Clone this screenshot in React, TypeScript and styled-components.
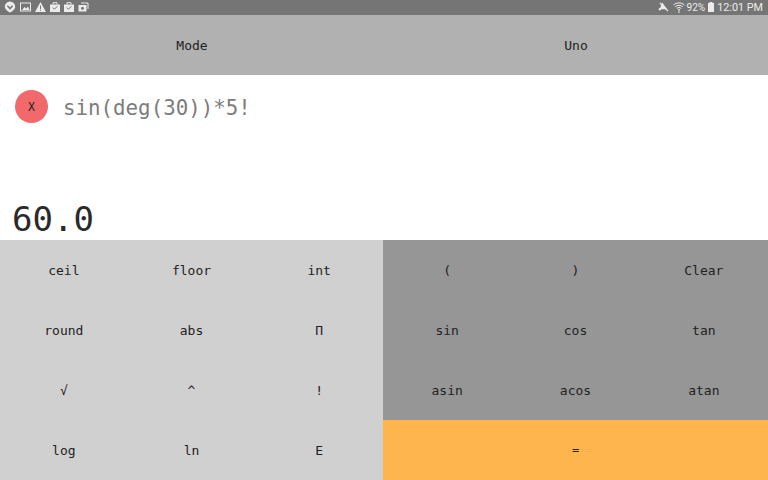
import React from 'react';
import styled, { createGlobalStyle } from 'styled-components';

const GlobalStyle = createGlobalStyle`
  html, body {
    margin: 0;
    padding: 0;
    background: #fff;
  }
`;

const Screen = styled.div`
  width: 768px;
  height: 480px;
  display: flex;
  flex-direction: column;
  overflow: hidden;
  font-family: 'DejaVu Sans Mono', 'Liberation Mono', monospace;
`;

const StatusBar = styled.div`
  height: 15px;
  padding: 0 5px 1px 4px;
  box-sizing: border-box;
  display: flex;
  align-items: center;
  justify-content: space-between;
  background: #757575;
  color: #ececec;
  font-family: 'Roboto', 'Liberation Sans', sans-serif;
`;

const IconGroup = styled.div`
  display: flex;
  align-items: center;
  gap: 4px;
`;

const StatusRight = styled.div`
  display: flex;
  align-items: center;
`;

const MutedSlot = styled.span`
  display: flex;
  margin-right: 4px;
`;

const Percent = styled.span`
  font-size: 10px;
  margin: 0 3px 0 2px;
`;

const Clock = styled.span`
  font-size: 10.8px;
  margin-left: 3px;
`;

const ModeBar = styled.div`
  height: 60px;
  display: grid;
  grid-template-columns: 1fr 1fr;
  background: #b1b1b1;
`;

const ModeCell = styled.div`
  display: flex;
  align-items: center;
  justify-content: center;
  font-size: 13px;
  color: #222;
`;

const Display = styled.div`
  height: 165px;
  display: flex;
  flex-direction: column;
  justify-content: space-between;
  background: #fff;
`;

const ExpressionRow = styled.div`
  display: flex;
  align-items: center;
  gap: 15px;
  padding: 15px 0 0 15px;
`;

const RemoveButton = styled.div`
  width: 33px;
  height: 33px;
  border-radius: 50%;
  display: flex;
  align-items: center;
  justify-content: center;
  background: #f2696b;
  color: #222;
  font-size: 11.5px;
`;

const Expression = styled.div`
  font-size: 20.8px;
  line-height: 26px;
  padding-top: 3px;
  color: #7c7c7c;
`;

const Result = styled.div`
  padding-left: 12px;
  font-size: 34px;
  line-height: 41px;
  color: #2a2a2a;
`;

const Keypad = styled.div`
  flex: 1;
  display: grid;
  grid-template-columns: 383px 385px;
`;

const KeyGrid = styled.div<{ $bg: string }>`
  display: grid;
  grid-template-columns: repeat(3, 1fr);
  grid-auto-rows: 60px;
  background: ${(p) => p.$bg};
`;

const RightPane = styled.div`
  display: flex;
  flex-direction: column;
`;

const Key = styled.div`
  display: flex;
  align-items: center;
  justify-content: center;
  font-size: 13px;
  color: #222;
`;

const EqualsKey = styled(Key)`
  flex: 1;
  background: #ffb54d;
  font-size: 12px;
`;

const leftKeys = ['ceil', 'floor', 'int', 'round', 'abs', 'Π', '√', '^', '!', 'log', 'ln', 'E'];
const rightKeys = ['(', ')', 'Clear', 'sin', 'cos', 'tan', 'asin', 'acos', 'atan'];

const Shield = () => (
  <svg width="12" height="12" viewBox="0 0 12 12">
    <path d="M6 .5a5.2 5.2 0 0 1 5.2 5.2c0 2.3-2.6 4.6-5.2 5.8C3.4 10.3.8 8 .8 5.7A5.2 5.2 0 0 1 6 .5z" fill="#ececec" />
    <path d="M3.4 4.8 6 7.6l2.6-2.8" fill="none" stroke="#757575" strokeWidth="1.5" />
  </svg>
);

const Picture = () => (
  <svg width="11" height="10" viewBox="0 0 11 10">
    <rect x=".5" y="1" width="10" height="8" fill="none" stroke="#ececec" />
    <path d="M2 8l2.5-3 1.8 1.6L8 4.6 9.5 8z" fill="#ececec" />
  </svg>
);

const Warning = () => (
  <svg width="11" height="10" viewBox="0 0 11 10">
    <path d="M5.5 0 11 10H0z" fill="#ececec" />
    <path d="M5 3.5h1v3.5H5zM5 7.8h1v1H5z" fill="#757575" />
  </svg>
);

const Briefcase = () => (
  <svg width="10" height="10" viewBox="0 0 10 10">
    <path d="M0 2.5h10V10H0z" fill="#ececec" />
    <path d="M3 2.5V.7h4v1.8" fill="none" stroke="#ececec" />
    <path d="M2.8 5.6 4.4 7.2 7.4 4.2" fill="none" stroke="#757575" />
  </svg>
);

const Stack = () => (
  <svg width="11" height="10" viewBox="0 0 11 10">
    <path d="M3 1h7v6" fill="none" stroke="#ececec" />
    <rect x=".5" y="3" width="8" height="6.5" fill="#ececec" />
    <circle cx="4.5" cy="6.2" r="1.5" fill="#757575" />
  </svg>
);

const Muted = () => (
  <svg width="11" height="10" viewBox="0 0 11 10">
    <path d="M0 4h2.5L7 .8v8.4L2.5 6H0z" fill="#ececec" transform="rotate(-35 5 5)" />
    <path d="M2 1l8 8" stroke="#ececec" strokeWidth="1.2" />
  </svg>
);

const Wifi = () => (
  <svg width="12" height="11" viewBox="0 0 12 11">
    <path d="M.5 3a8 8 0 0 1 11 0M2.2 4.8a5.6 5.6 0 0 1 7.6 0M3.8 6.4a3.2 3.2 0 0 1 4.4 0" fill="none" stroke="#ececec" />
    <path d="M6 6.6 7.2 8H4.8zM5.5 8h1v3h-1z" fill="#ececec" />
  </svg>
);

const Battery = () => (
  <svg width="6" height="10" viewBox="0 0 6 10">
    <path d="M1.5 0h3v1H6v9H0V1h1.5z" fill="#ececec" />
  </svg>
);

export default function App() {
  return (
    <Screen>
      <GlobalStyle />
      <StatusBar>
        <IconGroup>
          <Shield />
          <Picture />
          <Warning />
          <Briefcase />
          <Briefcase />
          <Stack />
        </IconGroup>
        <StatusRight>
          <MutedSlot>
            <Muted />
          </MutedSlot>
          <Wifi />
          <Percent>92%</Percent>
          <Battery />
          <Clock>12:01 PM</Clock>
        </StatusRight>
      </StatusBar>
      <ModeBar>
        <ModeCell>Mode</ModeCell>
        <ModeCell>Uno</ModeCell>
      </ModeBar>
      <Display>
        <ExpressionRow>
          <RemoveButton>X</RemoveButton>
          <Expression>sin(deg(30))*5!</Expression>
        </ExpressionRow>
        <Result>60.0</Result>
      </Display>
      <Keypad>
        <KeyGrid $bg="#d0d0d0">
          {leftKeys.map((k) => (
            <Key key={k}>{k}</Key>
          ))}
        </KeyGrid>
        <RightPane>
          <KeyGrid $bg="#969696">
            {rightKeys.map((k) => (
              <Key key={k}>{k}</Key>
            ))}
          </KeyGrid>
          <EqualsKey>=</EqualsKey>
        </RightPane>
      </Keypad>
    </Screen>
  );
}
